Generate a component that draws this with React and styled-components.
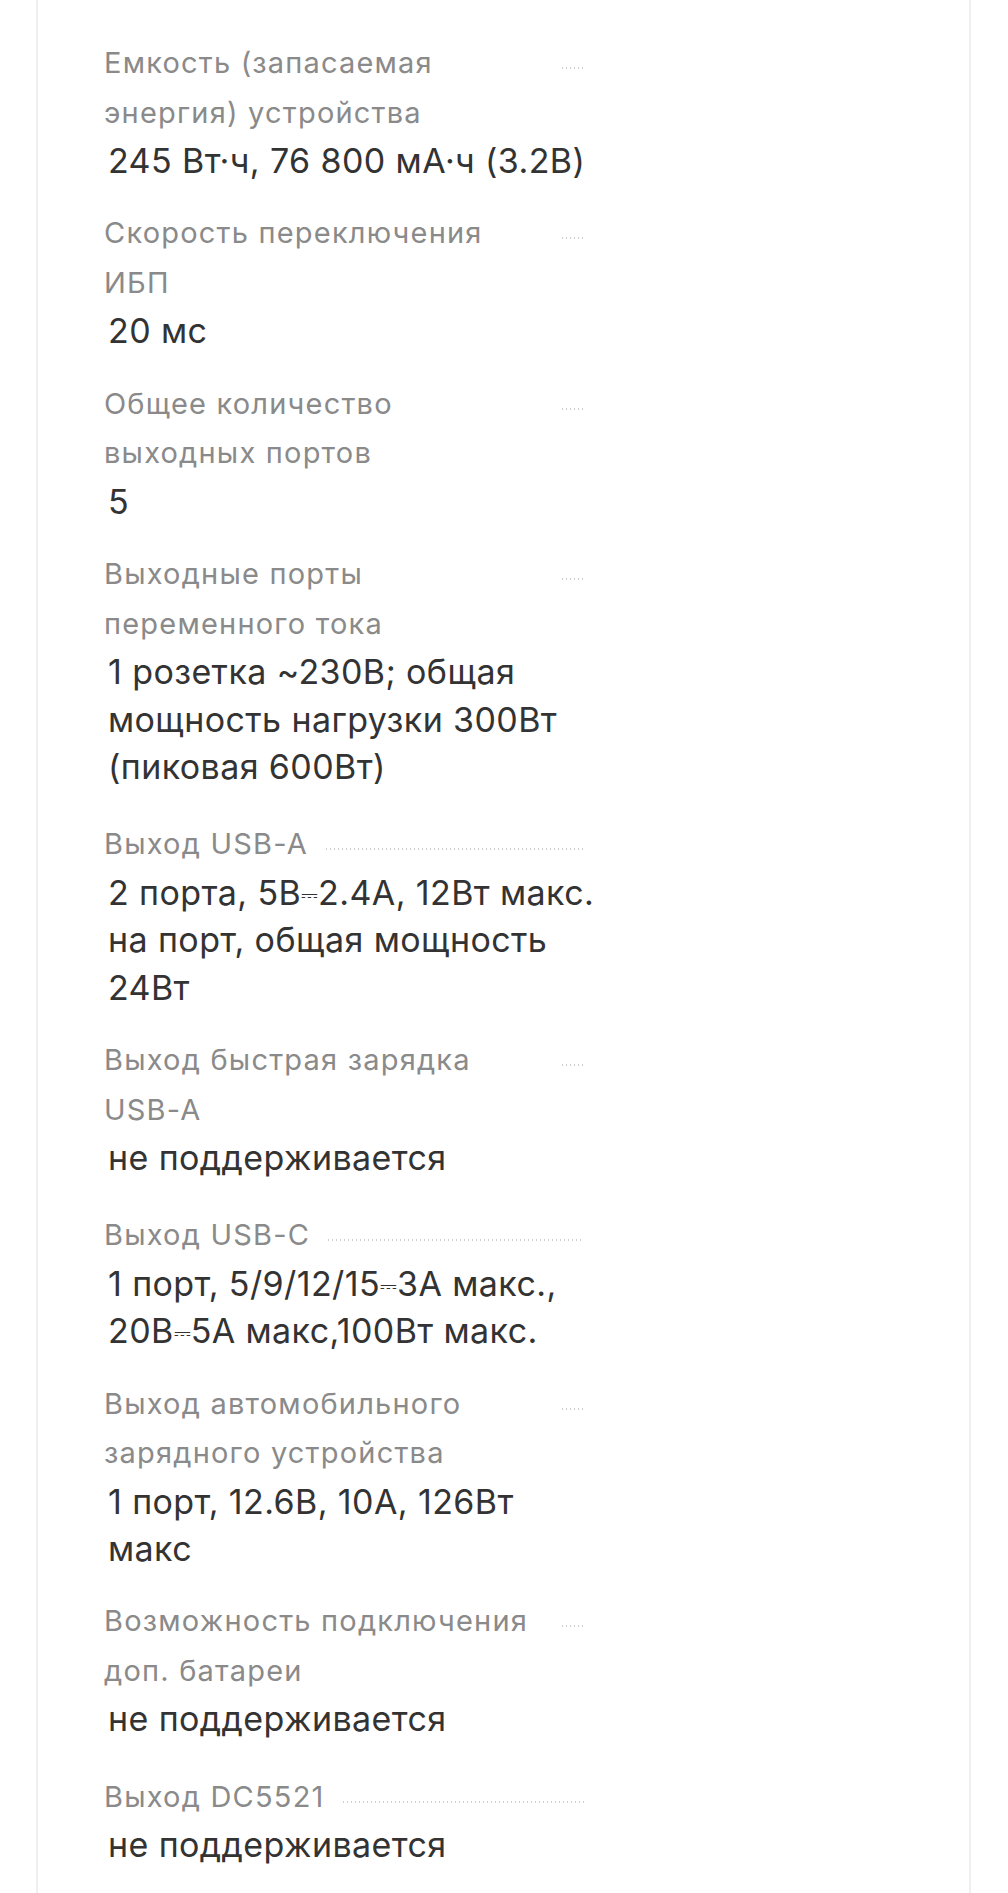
import React from 'react';
import styled, { createGlobalStyle } from 'styled-components';

const GlobalStyle = createGlobalStyle`
  html, body {
    margin: 0;
    padding: 0;
    background: #ffffff;
  }
  body {
    font-family: Inter, "Noto Sans", "Liberation Sans", sans-serif;
    -webkit-font-smoothing: antialiased;
  }
`;

const Page = styled.div`
  box-sizing: border-box;
  min-height: 100vh;
  padding: 0 37px 0 36px;
  display: flex;
`;

const Card = styled.section`
  flex: 1;
  background: #ffffff;
  border-left: 2px solid #efefef;
  border-right: 2px solid #efefef;
  padding: 38px 0 0 66px;
`;

const SpecList = styled.dl`
  margin: 0;
  width: 520px;
  display: flex;
  flex-direction: column;
  gap: 24px;
`;

const SpecItem = styled.div`
  display: flex;
  flex-direction: column;
  margin-top: ${(p) => (p.$loose ? '5px' : '0')};
`;

const LabelRow = styled.div`
  display: flex;
  align-items: baseline;
  padding-right: 40px;
`;

const Label = styled.dt`
  flex: 0 1 auto;
  min-width: 0;
  margin: 0;
  font-size: 29px;
  line-height: 49.5px;
  letter-spacing: 1.2px;
  font-weight: 400;
  color: #8a8a8a;
`;

const Leader = styled.span`
  flex: 1 0 22px;
  margin-left: 18px;
  height: 6px;
  background-image: linear-gradient(to right, #cfcfcf 0 1.5px, transparent 1.5px);
  background-size: 4px 1.5px;
  background-repeat: repeat-x;
  background-position: left top;
`;

const Value = styled.dd`
  margin: 0;
  padding-left: 4px;
  font-size: 34px;
  line-height: 47.4px;
  letter-spacing: 0.4px;
  font-weight: 400;
  color: #333333;
`;

const ValueLine = styled.span`
  display: block;
  height: 47.4px;
`;

const DcSign = styled.span`
  font-size: 0.62em;
  line-height: 0;
  vertical-align: 0.14em;
  letter-spacing: 0;
`;

const specs = [
  { label: 'Емкость (запасаемая энергия) устройства', value: ['245 Вт·ч, 76 800 мА·ч (3.2В)'] },
  { label: 'Скорость переключения ИБП', value: ['20 мс'] },
  { label: 'Общее количество выходных портов', value: ['5'] },
  {
    label: 'Выходные порты переменного тока',
    value: ['1 розетка ~230В; общая', 'мощность нагрузки 300Вт', '(пиковая 600Вт)'],
  },
  {
    label: 'Выход USB-A',
    value: ['2 порта, 5В⎓2.4А, 12Вт макс.', 'на порт, общая мощность', '24Вт'],
    loose: true,
  },
  { label: 'Выход быстрая зарядка USB-A', value: ['не поддерживается'] },
  {
    label: 'Выход USB-C',
    value: ['1 порт, 5/9/12/15⎓3А макс.,', '20В⎓5А макс,100Вт макс.'],
    loose: true,
  },
  {
    label: 'Выход автомобильного зарядного устройства',
    value: ['1 порт, 12.6В, 10А, 126Вт', 'макс'],
  },
  { label: 'Возможность подключения доп. батареи', value: ['не поддерживается'] },
  { label: 'Выход DC5521', value: ['не поддерживается'], loose: true },
];

function withDcSigns(text) {
  const parts = text.split('⎓');
  return parts.map((part, i) => (
    <React.Fragment key={i}>
      {part}
      {i < parts.length - 1 && <DcSign>⎓</DcSign>}
    </React.Fragment>
  ));
}

export default function App() {
  return (
    <>
      <GlobalStyle />
      <Page>
        <Card>
          <SpecList>
            {specs.map((s) => (
              <SpecItem key={s.label} $loose={s.loose}>
                <LabelRow>
                  <Label>{s.label}</Label>
                  <Leader aria-hidden="true" />
                </LabelRow>
                <Value>
                  {s.value.map((line) => (
                    <ValueLine key={line}>{withDcSigns(line)}</ValueLine>
                  ))}
                </Value>
              </SpecItem>
            ))}
          </SpecList>
        </Card>
      </Page>
    </>
  );
}
